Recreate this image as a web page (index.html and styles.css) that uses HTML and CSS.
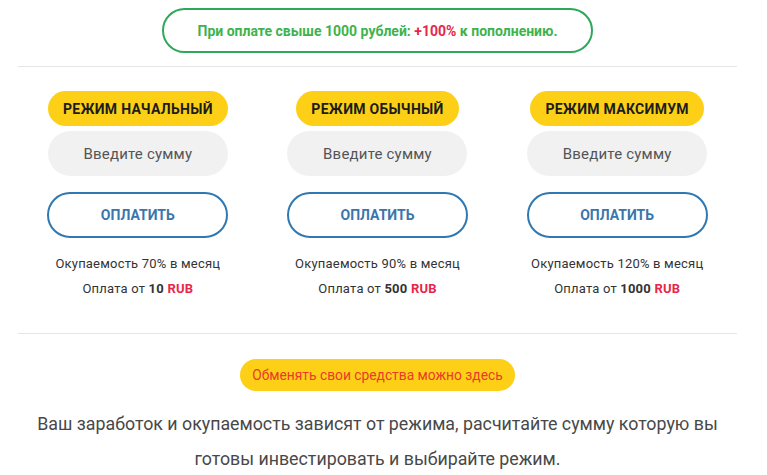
FILE: index.html
```html
<!DOCTYPE html>
<html lang="ru">
<head>
<meta charset="utf-8">
<link rel="stylesheet" href="styles.css">
</head>
<body>
<div class="page">
  <div class="promo-wrap">
    <div class="promo"><span>При оплате свыше 1000 рублей: <span class="red">+100%</span> к пополнению.</span></div>
  </div>
  <div class="plans">
    <div class="plan">
      <div class="badge">РЕЖИМ НАЧАЛЬНЫЙ</div>
      <div class="input">Введите сумму</div>
      <div class="pay">ОПЛАТИТЬ</div>
      <div class="info">Окупаемость 70% в месяц</div>
      <div class="info">Оплата от <b>10</b> <b class="red">RUB</b></div>
    </div>
    <div class="plan">
      <div class="badge">РЕЖИМ ОБЫЧНЫЙ</div>
      <div class="input">Введите сумму</div>
      <div class="pay">ОПЛАТИТЬ</div>
      <div class="info">Окупаемость 90% в месяц</div>
      <div class="info">Оплата от <b>500</b> <b class="red">RUB</b></div>
    </div>
    <div class="plan">
      <div class="badge">РЕЖИМ МАКСИМУМ</div>
      <div class="input">Введите сумму</div>
      <div class="pay">ОПЛАТИТЬ</div>
      <div class="info">Окупаемость 120% в месяц</div>
      <div class="info">Оплата от <b>1000</b> <b class="red">RUB</b></div>
    </div>
  </div>
  <div class="bottom">
    <div class="exchange">Обменять свои средства можно здесь</div>
    <p class="note">Ваш заработок и окупаемость зависят от режима, расчитайте сумму которую вы готовы инвестировать и выбирайте режим.</p>
  </div>
</div>
</body>
</html>
```
FILE: styles.css
```css
html, body {
  margin: 0;
  padding: 0;
  background: #ffffff;
}
body {
  font-family: Roboto, "Noto Sans", sans-serif;
  color: #333;
}
.page {
  width: 719px;
  margin-left: 18px;
}
.promo-wrap {
  display: flex;
  justify-content: center;
  padding-top: 8px;
  padding-bottom: 13px;
  border-bottom: 1px solid #e6e6e6;
}
.promo {
  width: 427px;
  height: 41px;
  border: 2px solid #2ea85a;
  border-radius: 24px;
  display: flex;
  align-items: center;
  justify-content: center;
  font-size: 14px;
  font-weight: bold;
  color: #3eb34d;
}
.red { color: #e8264b; }
.plans {
  display: grid;
  grid-template-columns: repeat(3, 1fr);
  padding-top: 24px;
  padding-bottom: 32px;
  border-bottom: 1px solid #e6e6e6;
}
.plan {
  display: flex;
  flex-direction: column;
  align-items: center;
}
.badge {
  height: 35px;
  padding: 0 15px;
  background: #fdd017;
  border-radius: 18px;
  display: flex;
  align-items: center;
  font-size: 14px;
  letter-spacing: 0.3px;
  font-weight: bold;
  color: #1c1c1c;
}
.input {
  margin-top: 5px;
  width: 180px;
  height: 45px;
  background: #f1f1f1;
  border-radius: 23px;
  display: flex;
  align-items: center;
  justify-content: center;
  font-size: 15px;
  letter-spacing: 0.2px;
  color: #555;
}
.pay {
  margin-top: 16px;
  width: 177px;
  height: 42px;
  border: 2px solid #2f78b2;
  border-radius: 24px;
  display: flex;
  align-items: center;
  justify-content: center;
  font-size: 14px;
  font-weight: bold;
  color: #3a76ac;
}
.info {
  font-size: 13px;
  letter-spacing: 0.2px;
  color: #333;
  line-height: 25px;
}
.pay + .info { margin-top: 13px; }
.info b { color: #333; }
.info b.red { color: #e8264b; }
.bottom {
  display: flex;
  flex-direction: column;
  align-items: center;
  padding-top: 25px;
}
.exchange {
  height: 32px;
  padding: 0 12px;
  background: #fdd017;
  border-radius: 16px;
  display: flex;
  align-items: center;
  font-size: 13.8px;
  color: #ea3a2a;
}
.note {
  margin: 15px 0 0;
  width: 719px;
  text-align: center;
  font-size: 17.8px;
  line-height: 35px;
  color: #484848;
}
```
